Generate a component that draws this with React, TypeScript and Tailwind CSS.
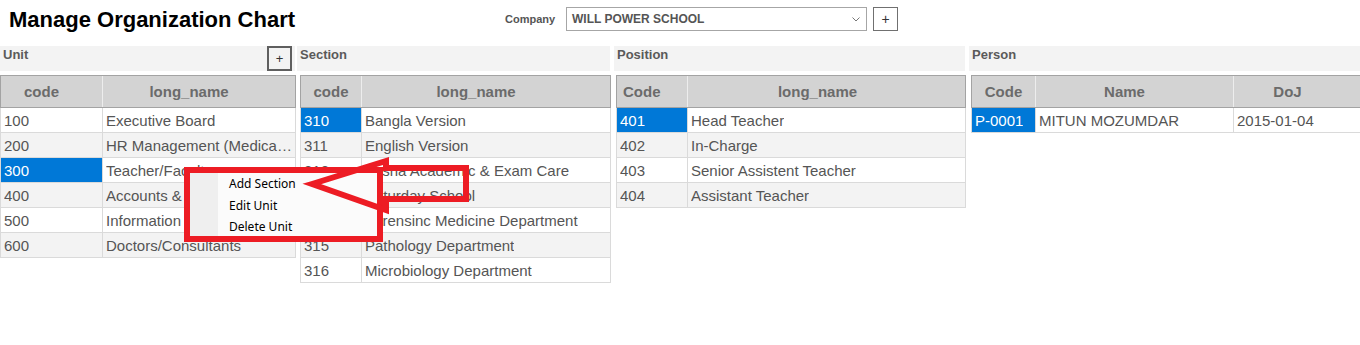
import React from "react";

type Col = { label: string; w: string; head: string };

const unitCols: Col[] = [
  { label: "code", w: "w-[101px]", head: "text-center pr-[20px]" },
  { label: "long_name", w: "flex-1", head: "text-center pr-[20px]" },
];
const sectionCols: Col[] = [
  { label: "code", w: "w-[60px]", head: "text-center" },
  { label: "long_name", w: "flex-1", head: "text-center pr-[20px]" },
];
const positionCols: Col[] = [
  { label: "Code", w: "w-[70px]", head: "text-left pl-[6px]" },
  { label: "long_name", w: "flex-1", head: "text-center pr-[18px]" },
];
const personCols: Col[] = [
  { label: "Code", w: "w-[63px]", head: "text-center" },
  { label: "Name", w: "w-[198px]", head: "text-center pr-[20px]" },
  { label: "DoJ", w: "flex-1", head: "text-center pr-[20px]" },
];

const units = [
  ["100", "Executive Board"],
  ["200", "HR Management (Medical Services)"],
  ["300", "Teacher/Faculty"],
  ["400", "Accounts & Finance"],
  ["500", "Information Technology"],
  ["600", "Doctors/Consultants"],
];
const sections = [
  ["310", "Bangla Version"],
  ["311", "English Version"],
  ["312", "Vasha Academic & Exam Care"],
  ["313", "Saturday School"],
  ["314", "Forensinc Medicine Department"],
  ["315", "Pathology Department"],
  ["316", "Microbiology Department"],
];
const positions = [
  ["401", "Head Teacher"],
  ["402", "In-Charge"],
  ["403", "Senior Assistent Teacher"],
  ["404", "Assistant Teacher"],
];
const persons = [["P-0001", "MITUN MOZUMDAR", "2015-01-04"]];

function Grid({ cols, rows, sel }: { cols: Col[]; rows: string[][]; sel: number }) {
  return (
    <div>
      {/* column headers */}
      <div className="flex h-[33px] border border-[#a3a3a3] bg-[#d3d3d3]">
        {cols.map((c, i) => (
          <div
            key={c.label}
            className={`${c.w} ${i > 0 ? "border-l border-[#ededed]" : ""} flex items-center text-[15px] font-bold text-[#6b6b6b] leading-[17px]`}
          >
            <span className={`w-full ${c.head}`}>{c.label}</span>
          </div>
        ))}
      </div>
      {/* rows */}
      {rows.map((r, ri) => (
        <div
          key={r[0]}
          className={`flex h-[25px] border-x border-b border-[#dadada] ${ri % 2 === 1 ? "bg-[#f3f3f3]" : "bg-white"}`}
        >
          {r.map((v, ci) => {
            const selected = ri === sel && ci === 0;
            return (
              <div
                key={ci}
                className={`${cols[ci].w} min-w-0 flex items-center pl-[3px] ${ci > 0 ? "border-l border-[#dadada]" : ""} ${
                  selected ? "bg-[#0078d7] text-white" : "text-[#555]"
                }`}
              >
                <span className="truncate text-[15px] leading-[17px]">{v}</span>
              </div>
            );
          })}
        </div>
      ))}
    </div>
  );
}

function PanelHead({ label, add }: { label: string; add?: boolean }) {
  return (
    <div className="flex justify-between h-[25px] bg-[#f3f3f3]">
      <span className="pl-[3px] pt-[1px] text-[13px] font-bold leading-[15px] text-[#5a5a5a]">{label}</span>
      {add && (
        <button className="mr-[3px] w-[25px] h-[25px] border-2 border-[#5f5f5f] bg-[#f3f3f3] flex items-center justify-center text-[13px] text-[#333] leading-none">
          +
        </button>
      )}
    </div>
  );
}

export default function App() {
  return (
    <div className="relative w-[1360px] h-[345px] overflow-hidden bg-white font-['Liberation_Sans',Arial,sans-serif]">
      {/* top bar */}
      <div className="flex items-center h-[24px] mt-[7px]">
        <h1 className="w-[505px] pl-[9px] text-[22px] font-bold leading-[25px] text-black">Manage Organization Chart</h1>
        <span className="w-[61px] text-[11px] font-bold text-[#555]">Company</span>
        <div className="w-[301px] h-[24px] border border-[#a6a6a6] bg-white flex items-center justify-between pl-[5px] pr-[6px]">
          <span className="text-[12px] font-bold text-[#555]">WILL POWER SCHOOL</span>
          <svg width="8" height="5" viewBox="0 0 8 5">
            <polyline points="0.5,0.5 4,4 7.5,0.5" fill="none" stroke="#777" strokeWidth="1" />
          </svg>
        </div>
        <button className="ml-[6px] w-[25px] h-[24px] border border-[#707070] bg-white flex items-center justify-center text-[14px] text-[#333] leading-none">
          +
        </button>
      </div>

      {/* panels */}
      <div className="flex mt-[15px]">
        <div className="w-[297px] shrink-0">
          <div className="w-[295px]">
            <PanelHead label="Unit" add />
          </div>
          <div className="w-[296px] mt-[4px]">
            <Grid cols={unitCols} rows={units} sel={2} />
          </div>
        </div>

        <div className="w-[316px] shrink-0">
          <div className="w-[313px]">
            <PanelHead label="Section" />
          </div>
          <div className="w-[311px] ml-[3px] mt-[4px]">
            <Grid cols={sectionCols} rows={sections} sel={0} />
          </div>
        </div>

        <div className="w-[356px] shrink-0">
          <div className="w-[351px] ml-[1px]">
            <PanelHead label="Position" />
          </div>
          <div className="w-[350px] ml-[3px] mt-[4px]">
            <Grid cols={positionCols} rows={positions} sel={0} />
          </div>
        </div>

        <div className="flex-1">
          <PanelHead label="Person" />
          <div className="w-[391px] ml-[2px] mt-[4px]">
            <Grid cols={personCols} rows={persons} sel={0} />
          </div>
        </div>
      </div>

      {/* context menu */}
      <div className="absolute left-[190px] top-[171px] w-[190px] h-[68px] flex bg-[#fbfbfb] font-['Noto_Sans',sans-serif]">
        <div className="w-[28px] bg-[#efefef]" />
        <div className="flex flex-col pt-[2px] pl-[11px]">
          <span className="h-[22px] flex items-center text-[12px] text-black">Add Section</span>
          <span className="h-[21px] flex items-center text-[12px] text-black">Edit Unit</span>
          <span className="h-[22px] flex items-center text-[12px] text-black">Delete Unit</span>
        </div>
      </div>

      {/* annotation */}
      <div className="absolute left-[184px] top-[167px] w-[199px] h-[75px] border-[6px] border-[#ed1c24]" />
      <svg className="absolute left-0 top-0 pointer-events-none" width="1360" height="345">
        <polygon
          points="312,184 386,161 386,168 466,168 466,199 386,199 386,210"
          fill="none"
          stroke="#ed1c24"
          strokeWidth="6"
          strokeLinejoin="miter"
          strokeMiterlimit="10"
        />
      </svg>
    </div>
  );
}
